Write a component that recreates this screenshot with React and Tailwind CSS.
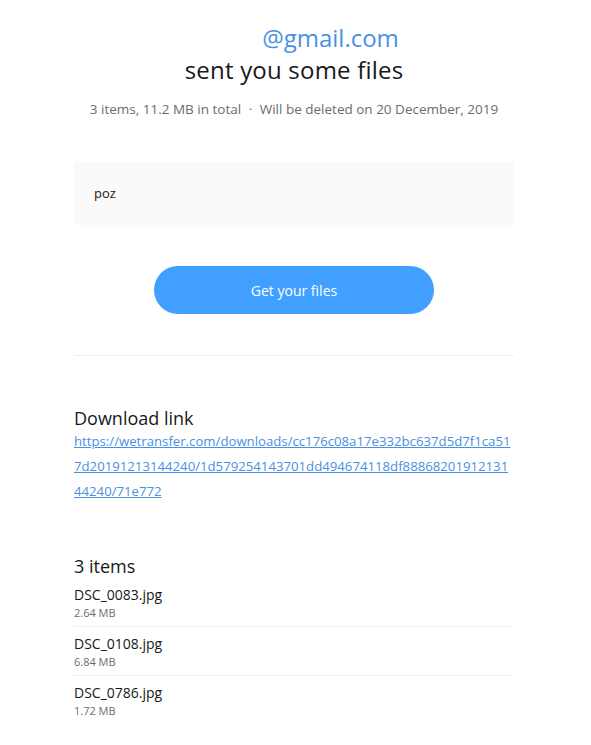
import React from 'react';

const files = [
  { name: 'DSC_0083.jpg', size: '2.64 MB' },
  { name: 'DSC_0108.jpg', size: '6.84 MB' },
  { name: 'DSC_0786.jpg', size: '1.72 MB' },
];

export default function App() {
  return (
    <div
      className="min-h-screen bg-white text-[#17181a]"
      style={{ fontFamily: '"Open Sans", "Noto Sans", Arial, sans-serif' }}
    >
      <div className="w-[440px] ml-[74px] pt-[22px] pb-6">
        {/* Header */}
        <div className="text-center">
          <h1 className="text-[24px] leading-[32px] text-[#4a90e2]">
            <span className="inline-block w-[73px]" />
            @gmail.com
          </h1>
          <h2 className="text-[24px] leading-[32px] tracking-[0.2px]">sent you some files</h2>
          <p className="mt-[13px] text-[13.5px] leading-[20px] text-[#6a6d70]">
            3 items, 11.2 MB in total <span className="mx-1">·</span> Will be deleted on 20 December, 2019
          </p>
        </div>

        {/* Message */}
        <div className="mt-[43px] h-[63px] bg-[#fafafa] flex items-center px-5 text-[13px]">
          poz
        </div>

        <div className="mt-[41px] flex justify-center">
          <button className="w-[280px] h-[48px] rounded-full bg-[#409fff] text-white text-[14px]">
            Get your files
          </button>
        </div>

        <div className="mt-[41px] border-t border-[#eeeeee]" />

        {/* Download link */}
        <div className="mt-[51px]">
          <h3 className="text-[18px] leading-[22px]">Download link</h3>
          <a
            href="#"
            className="block whitespace-nowrap text-[13.2px] leading-[25px] text-[#4a90e2] underline"
          >
            https://wetransfer.com/downloads/cc176c08a17e332bc637d5d7f1ca51
            <br />
            7d20191213144240/1d579254143701dd494674118df88868201912131
            <br />
            44240/71e772
          </a>
        </div>

        {/* Items */}
        <div className="mt-[51px]">
          <h3 className="text-[18px] leading-[22px]">3 items</h3>
          <ul className="mt-[1px]">
            {files.map((f, i) => (
              <li
                key={f.name}
                className={`pt-[7px] pb-[6px] ${i < files.length - 1 ? 'border-b border-[#f0f0f0]' : ''}`}
              >
                <div className="text-[14px] leading-[20px]">{f.name}</div>
                <div className="text-[11px] leading-[15px] text-[#6a6d70]">{f.size}</div>
              </li>
            ))}
          </ul>
        </div>
      </div>
    </div>
  );
}
